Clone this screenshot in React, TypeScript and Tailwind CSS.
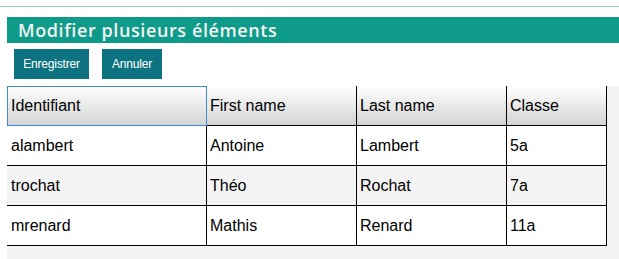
import React from "react";

type Row = { id: string; first: string; last: string; classe: string };

const ROWS: Row[] = [
  { id: "alambert", first: "Antoine", last: "Lambert", classe: "5a" },
  { id: "trochat", first: "Théo", last: "Rochat", classe: "7a" },
  { id: "mrenard", first: "Mathis", last: "Renard", classe: "11a" },
];

const COLS = ["w-[200px]", "w-[150px]", "w-[150px]", "w-[100px]"];

export default function App() {
  return (
    <div className="w-[619px] h-[259px] bg-white overflow-hidden font-['Liberation_Sans',Arial,sans-serif]">
      {/* top rule */}
      <div className="mt-[6px] h-px bg-[#9ccad0]" />

      {/* title bar */}
      <div className="mt-[10px] ml-[7px] h-[26px] bg-[#0f9b8a] flex items-center pl-[11px]">
        <h1 className="text-[18px] font-semibold tracking-[0.6px] text-[#f2f2f2] font-['Open_Sans',sans-serif] leading-none">
          Modifier plusieurs éléments
        </h1>
      </div>

      {/* actions */}
      <div className="mt-[6px] ml-[14px] flex gap-[13px]">
        <button className="w-[75px] h-[30px] bg-[#0e7380] text-white text-[12px] tracking-[-0.2px]">
          Enregistrer
        </button>
        <button className="w-[60px] h-[30px] bg-[#0e7380] text-white text-[12px] tracking-[-0.2px]">
          Annuler
        </button>
      </div>

      {/* grid */}
      <div className="mt-[7px] ml-[7px] h-[173px] bg-[#f4f4f4]">
        <div className="w-[600px] text-[16px] text-black">
          <div className="flex h-[40px] bg-gradient-to-b from-[#ffffff] to-[#d3d3d3]">
            <div className="w-[200px] h-[40px] border border-[#3f88d6] pl-[3px] flex items-center">
              Identifiant
            </div>
            <div className="w-[150px] border-r border-b border-black pl-[3px] flex items-center">
              First name
            </div>
            <div className="w-[150px] border-r border-b border-black pl-[3px] flex items-center">
              Last name
            </div>
            <div className="w-[100px] border-r border-b border-black pl-[3px] flex items-center">
              Classe
            </div>
          </div>
          {ROWS.map((row, i) => (
            <div
              key={row.id}
              className={`flex h-[40px] ${i % 2 === 1 ? "bg-[#f3f3f3]" : "bg-white"}`}
            >
              {[row.id, row.first, row.last, row.classe].map((v, j) => (
                <div
                  key={j}
                  className={`${COLS[j]} border-r border-b border-black flex items-center ${
                    j === 0 ? "pl-[4px]" : "pl-[3px]"
                  }`}
                >
                  {v}
                </div>
              ))}
            </div>
          ))}
        </div>
      </div>
    </div>
  );
}
